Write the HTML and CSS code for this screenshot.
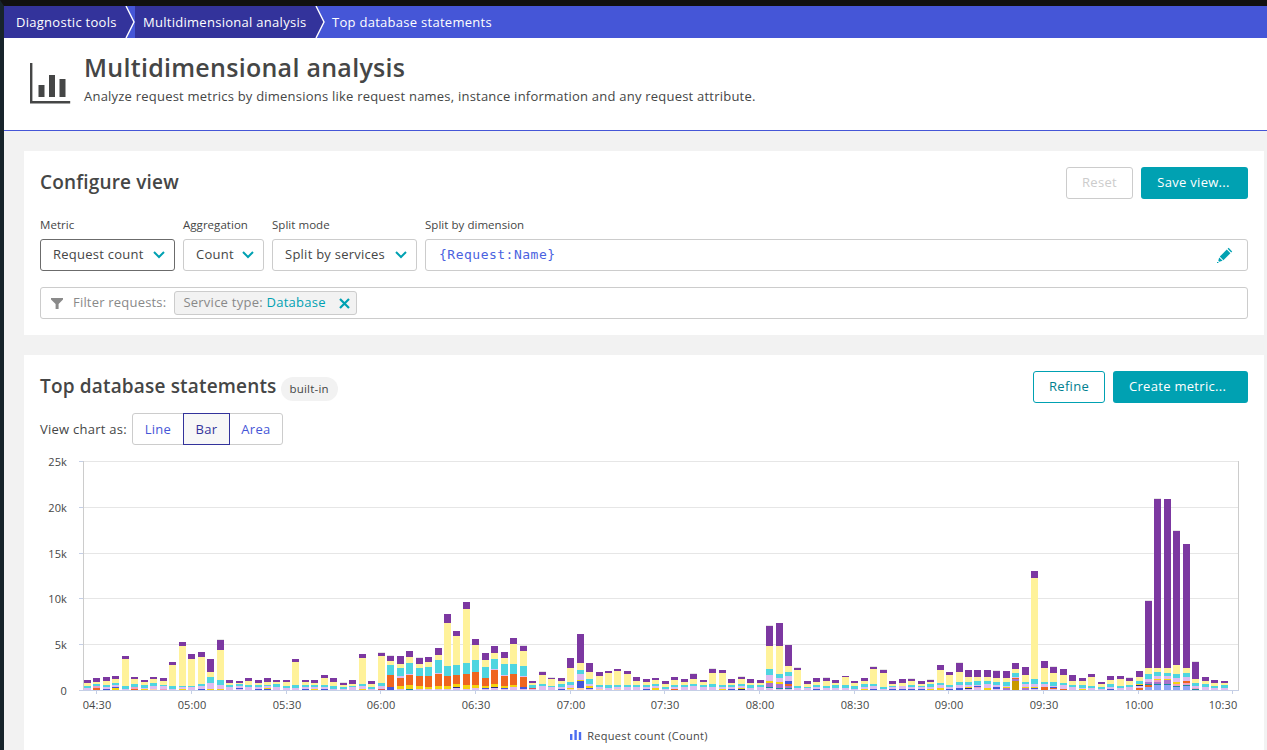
FILE: index.html

```html
<!DOCTYPE html>
<html lang="en">
<head>
    <meta charset="UTF-8">
    <meta name="viewport" content="width=device-width, initial-scale=1.0">
    <title>Multidimensional analysis</title>
    <link rel="stylesheet" href="styles.css">
</head>
<body>
    <div class="window">
        <nav class="breadcrumbs">
            <a class="crumb crumb-first">Diagnostic tools</a>
            <svg class="crumb-sep" width="10" height="32" viewBox="0 0 10 32"><polygon points="0,0 1,0 9,16 1,32 0,32" fill="#33339b"/><polyline points="1,0 9,16 1,32" fill="none" stroke="#fff" stroke-width="1.4"/></svg>
            <a class="crumb crumb-second">Multidimensional analysis</a>
            <svg class="crumb-sep" width="10" height="32" viewBox="0 0 10 32"><polygon points="0,0 1,0 9,16 1,32 0,32" fill="#33339b"/><polyline points="1,0 9,16 1,32" fill="none" stroke="#fff" stroke-width="1.4"/></svg>
            <a class="crumb crumb-current">Top database statements</a>
        </nav>

        <header class="page-head">
            <svg class="page-icon" width="42" height="44" viewBox="0 0 42 44">
                <path d="M1.2 2v39.2h39" fill="none" stroke="#454646" stroke-width="2.4"/>
                <rect x="8.5" y="24" width="6" height="12" fill="#454646"/>
                <rect x="19" y="14" width="6" height="22" fill="#454646"/>
                <rect x="29.5" y="18" width="6" height="18" fill="#454646"/>
            </svg>
            <div>
                <h1>Multidimensional analysis</h1>
                <p>Analyze request metrics by dimensions like request names, instance information and any request attribute.</p>
            </div>
        </header>

        <main class="content">
            <section class="card card-config">
                <div class="card-top">
                    <h2>Configure view</h2>
                    <div class="actions">
                        <button class="btn btn-disabled btn-reset">Reset</button>
                        <button class="btn btn-primary btn-save">Save view...</button>
                    </div>
                </div>

                <div class="fields">
                    <div class="field field-metric">
                        <label>Metric</label>
                        <div class="select select-active">Request count
                            <svg width="12" height="8" viewBox="0 0 12 8"><polyline points="1,1 6,6 11,1" fill="none" stroke="#00a1b2" stroke-width="2"/></svg>
                        </div>
                    </div>
                    <div class="field field-aggregation">
                        <label>Aggregation</label>
                        <div class="select">Count
                            <svg width="12" height="8" viewBox="0 0 12 8"><polyline points="1,1 6,6 11,1" fill="none" stroke="#00a1b2" stroke-width="2"/></svg>
                        </div>
                    </div>
                    <div class="field field-split">
                        <label>Split mode</label>
                        <div class="select">Split by services
                            <svg width="12" height="8" viewBox="0 0 12 8"><polyline points="1,1 6,6 11,1" fill="none" stroke="#00a1b2" stroke-width="2"/></svg>
                        </div>
                    </div>
                    <div class="field field-dimension">
                        <label>Split by dimension</label>
                        <div class="select dimension-input">
                            <code>{Request:Name}</code>
                            <svg width="16" height="16" viewBox="0 0 16 16" fill="#00a1b2"><path d="M11.6.8l3.6 3.6-1 1-3.6-3.6z"/><path d="M9.8 2.6l3.6 3.6-7 7-3.6-3.6z"/><path d="M2.2 10.4l3.4 3.4-3.4.9-.9-.9z"/><rect x="0" y="15" width="1.4" height="1"/></svg>
                        </div>
                    </div>
                </div>

                <div class="filter-box">
                    <svg width="12" height="11" viewBox="0 0 12 11"><path d="M0 0h12v1.6L7.6 6v5H4.6V6L0 1.6z" fill="#8a8a8a"/></svg>
                    <span class="filter-label">Filter requests:</span>
                    <span class="chip">Service type: <b>Database</b>
                        <svg width="11" height="11" viewBox="0 0 11 11"><path d="M1 1l9 9M10 1l-9 9" stroke="#00a1b2" stroke-width="2.2"/></svg>
                    </span>
                </div>
            </section>

            <section class="card card-chart">
                <div class="card-top">
                    <div class="title-row">
                        <h2>Top database statements</h2>
                        <span class="pill">built-in</span>
                    </div>
                    <div class="actions">
                        <button class="btn btn-outline btn-refine">Refine</button>
                        <button class="btn btn-primary btn-create">Create metric...</button>
                    </div>
                </div>

                <div class="view-row">
                    <span>View chart as:</span>
                    <div class="toggle">
                        <button class="toggle-line">Line</button>
                        <button class="toggle-bar active">Bar</button>
                        <button class="toggle-area">Area</button>
                    </div>
                </div>

                <!-- viewBox uses page coordinates so the numbers can be checked against the screenshot -->
                <svg id="chart" class="chart" width="1208" height="270" viewBox="40 450 1208 270"></svg>

                <div class="legend">
                    <svg width="12" height="10" viewBox="0 0 12 10" fill="#4c6ef0"><rect x="0" y="4" width="2.4" height="6"/><rect x="4.4" y="0" width="2.4" height="10"/><rect x="8.8" y="2" width="2.4" height="8"/></svg>
                    Request count (Count)
                </div>
            </section>
        </main>
    </div>
    <script src="chart.js"></script>
</body>
</html>
```

FILE: styles.css

```css
* {
    box-sizing: border-box;
}
html, body {
    margin: 0;
    height: 100%;
    overflow: hidden;
}
body {
    font-family: "Open Sans", "Noto Sans", sans-serif;
    color: #454646;
    font-size: 13px;
    letter-spacing: 0.25px;
}
.window {
    height: 750px;
    border-top: 6px solid #111;
    border-left: 4px solid #17242b;
    background-color: #f2f2f2;
    overflow: hidden;
}

/* Breadcrumbs */
.breadcrumbs {
    display: flex;
    height: 32px;
    align-items: stretch;
    background-color: #4556d7;
    color: #fff;
    font-size: 13px;
    line-height: 32px;
    letter-spacing: 0.28px;
}
.crumb {
    white-space: nowrap;
}
.crumb-first {
    background-color: #33339b;
    padding-left: 12px;
    width: 121px;
}
.crumb-second {
    background-color: #33339b;
    padding-left: 8px;
    width: 180px;
}
.crumb-current {
    padding-left: 7px;
}
.crumb-sep {
    flex: none;
}

/* Page header */
.page-head {
    display: flex;
    height: 93px;
    padding: 15px 0 0 26px;
    background-color: #fff;
    border-bottom: 1px solid #4556d7;
}
.page-icon {
    margin: 8px 12px 0 0;
    flex: none;
}
.page-head h1 {
    margin: 0;
    font-size: 25px;
    line-height: 29px;
    font-weight: 600;
    letter-spacing: 0.28px;
}
.page-head p {
    margin: 6px 0 0;
    font-size: 13px;
    line-height: 17px;
    letter-spacing: 0.22px;
}

/* Cards */
.content {
    padding: 20px 3px 0 20px;
}
.card {
    background-color: #fff;
    padding: 16px;
}
.card-config {
    height: 184px;
    margin-bottom: 20px;
}
.card-top {
    display: flex;
    justify-content: space-between;
    align-items: center;
    height: 32px;
}
.card h2 {
    margin: 0;
    padding-bottom: 2px;
    font-size: 19px;
    line-height: 28px;
    font-weight: 600;
    letter-spacing: 0.17px;
}
.actions {
    display: flex;
    gap: 8px;
}
.btn {
    height: 32px;
    border-radius: 3px;
    font-family: inherit;
    font-size: 13px;
    font-weight: 500;
    letter-spacing: 0.3px;
    padding: 0 0 2px;
    background: #fff;
}
.btn-primary {
    border: none;
    background-color: #00a1b2;
    color: #fff;
}
.btn-disabled {
    border: 1px solid #ccc;
    color: #ccc;
}
.btn-outline {
    border: 1px solid #00a1b2;
    color: #00808f;
}
.btn-reset { width: 67px; }
.btn-save {
    width: 107px;
    padding-right: 2px;
}
.btn-refine { width: 72px; }
.btn-create {
    width: 135px;
    padding-left: 16px;
    text-align: left;
}

/* Configure view fields */
.fields {
    display: flex;
    gap: 8px;
    margin-top: 18px;
}
.field label {
    display: block;
    font-size: 11.5px;
    line-height: 16px;
    letter-spacing: 0.04px;
    margin-bottom: 6px;
}
.field-metric { width: 135px; }
.field-aggregation { width: 81px; }
.field-split { width: 145px; }
.field-dimension { flex: 1; }
.select {
    display: flex;
    justify-content: space-between;
    align-items: center;
    height: 32px;
    padding: 0 9px 2px 12px;
    border: 1px solid #ccc;
    border-radius: 3px;
    white-space: nowrap;
}
.select svg {
    margin-top: 2px;
}
.select-active {
    border-color: #6b6b6b;
}
.dimension-input {
    padding: 0 14px 2px 13px;
}
.dimension-input code {
    font-family: "DejaVu Sans Mono", "Liberation Mono", monospace;
    font-size: 13px;
    letter-spacing: 0.5px;
    color: #4a62e0;
}
.filter-box {
    display: flex;
    align-items: center;
    height: 32px;
    margin-top: 16px;
    padding-left: 10px;
    border: 1px solid #ccc;
    border-radius: 3px;
}
.filter-label {
    margin-left: 10px;
    padding-bottom: 2px;
    letter-spacing: 0.2px;
    color: #898989;
}
.chip {
    display: flex;
    align-items: center;
    height: 24px;
    margin-left: 8px;
    padding: 0 6px 2px 8px;
    background-color: #f2f2f2;
    border: 1px solid #ccc;
    border-radius: 3px;
    color: #898989;
    white-space: pre;
}
.chip b {
    font-weight: 400;
    color: #00a1b2;
}
.chip svg {
    margin: 2px 0 0 13px;
}

/* Chart card */
.title-row {
    display: flex;
    align-items: center;
    gap: 4px;
}
.pill {
    height: 24px;
    padding: 0 9px;
    border-radius: 12px;
    background-color: #f2f2f2;
    font-size: 11.5px;
    line-height: 23px;
    letter-spacing: 0.2px;
    margin-top: 3px;
}
.view-row {
    display: flex;
    align-items: center;
    gap: 5px;
    margin-top: 10px;
}
.toggle {
    display: flex;
    height: 32px;
    border: 1px solid #ccc;
    border-radius: 3px;
}
.toggle button {
    border: none;
    background: none;
    padding: 0;
    font-family: inherit;
    font-size: 13px;
    letter-spacing: 0.25px;
    color: #4556d7;
}
.toggle-line { width: 50px; }
.toggle-bar { width: 47px; }
.toggle-area { width: 52px; }
.toggle .active {
    margin: -1px 0;
    background-color: #f7f7f7;
    border: 1px solid #33339b;
    color: #33339b;
}
.chart {
    display: block;
    margin-top: 5px;
}
.chart text {
    font-size: 11px;
    letter-spacing: 0.1px;
    fill: #454646;
}
.legend {
    display: flex;
    align-items: center;
    justify-content: center;
    gap: 5px;
    height: 20px;
    margin-top: 5px;
    padding-right: 10px;
    font-size: 11px;
    letter-spacing: 0.3px;
}
```

FILE: chart.js

```js
// Stacks are drawn bottom to top, letter = series, number = height in px (229px = 25k)
const colors = {
    p: "#7c38a1", y: "#fff29a", c: "#4fd5e0", l: "#dfbcf0", o: "#ef651f",
    g: "#f5d30f", b: "#4556d7", n: "#2a2a80", t: "#1a8a9e", r: "#e0524d",
    k: "#f19ec0", f: "#ffd0ab", v: "#a972cc", d: "#c99a00", w: "#8fa4f7",
    e: "#e6e6e6"
};

const bars = [
    "l2c2y3p3", "o2k2c2y2p4", "b1l2c2y4p4", "g2b1l2c2y4p3", "l1c3y27p3", "o1k2c3y5p2", "g1l1c3y3p2", "f1l3c3y4p2",
    "k1l3c1y4p3", "l1c3y21p3", "g1l2c1y40p4", "l3c1y27p5", "b1l3c2y27p5", "g1l6c6y5p13", "g1l4c5y30p10e1", "l3c2y2p3",
    "l1b1l2c2y1p2", "l3c2y4p3", "b1l2c2y2p3", "b1g1l2c1y3p4", "l3c3y2p2", "l2c2y4p2", "l2c3y23p3", "b1l2c2y3p2",
    "g1l2c2y2p3", "b1l2c2y7p3", "l1c3y4p4", "l1c2y2p2e1", "l3c1y2p4", "g1l3c2y26p4", "l1c2y3p3", "r1l3c3y27p3e1",
    "b3o12c10y4p5e1", "l1g3o8l2c8y4p8", "t1g4o10l1c11y6p6", "l1g3o10c8y4p6e1", "l1g2o11c9y5p5", "l1g3o12l1c13y5p7", "l1g3o10c10y43p9", "l2n1g3o9c10y29p5",
    "l1g4o11c11y54p7", "l2g3o13c12y15p6", "l1b1g2o8c11y7p7", "l2n1g3o14l1c10y6p7", "l1b1g2o10l1c11y6p6", "l3g2o11c10y20p6", "l1b2o10l1c10y15p5e1", "l1r1c3y2p2",
    "l4c2y9p3e1", "l3c1y7p1e1", "b1l2c3y3p3", "f1g1l3c3y14p10", "f2b7g1l6c4y7p29", "l1b1g2l2c5y7p9", "f1l2c2y9p4", "l2c3y12p2",
    "f1l2c2y14p2", "l3c2y11p3", "l3c2y4p4", "b1l2c2y3p3", "g2l2c2y4p2", "l1c2y3p3", "o1l2c2y5p3", "l3c2y3p3",
    "l4c2y5p5e1", "l3c2y3p2", "l3c3y11p4e1", "g1l2c2y12p3", "b1l2c2y2p4", "n1g1l2c2y5p2e1", "l2c3y2p4", "l3c2y2p3",
    "l2t1v4g2l6c6y23p20e1", "l1t1v4g2l4c4y28p23", "l1t1v2o2b3l5c4y6p21", "l2c2y16p2e1", "l2c1y3p3", "b1l2c2y3p4", "l2c2y5p3e1", "l2c3y2p3",
    "l2c3y8p1", "l1c3y3p2", "g1l2c3y3p3", "b1l3c2y15p2e1", "l1c2y14p3e1", "b1l2c1y2p3", "b1l3y3p4", "b1l2c2y4p2e1",
    "b1l2c1y2p3", "g1l2c3y2p2e1", "g2l3c2y13p5", "b1l2c2y10p3", "b2l3c3y10p9e1", "l1n1g1l2c3y5p7", "l2k1b1l1c4y4p7", "g2l4c3y4p7",
    "l1b2l2c3y4p7e1", "v2g1l1c4y4p7", "d9v2o1l1c4y4p6", "v2g1l3c2y7p8", "l1b1g1l3c5y101p7", "o3l3c2y14p7", "l1o1b1l1c4y9p6e1", "o1l4c2y8p6",
    "l3c2y4p6", "g1l1c3y4p3", "l2c2y9p3", "l1c2y3p2", "b1l2c3y4p4", "l2c2y7p3", "l3c2y4p3e1", "o2l2n1g1c3y4p6",
    "w3o2t1v2l3c5y6p67e1", "w5t1v2k2g1l3c4y4p169e1", "w5t1v4g1l3c3y5p169", "w3t1k2g2l4c4y9p134e1", "w4t1k2o2l4c4y5p124", "t1k1l2c3y4p17e1", "l3c3y3p4", "l2c2y3p3",
    "l2c3y2p2"
];

const chart = document.getElementById("chart");
const baseY = 690;

function add(tag, attrs, text) {
    const el = document.createElementNS("http://www.w3.org/2000/svg", tag);
    for (const key in attrs) el.setAttribute(key, attrs[key]);
    if (text) el.textContent = text;
    chart.appendChild(el);
}

// Grid and y axis
["0", "5k", "10k", "15k", "20k", "25k"].forEach((label, i) => {
    const y = baseY - Math.round(i * 45.8);
    if (i > 0) add("rect", { x: 83, y: y, width: 1155, height: 1, fill: "#e6e6e6" });
    add("rect", { x: 79, y: y, width: 4, height: 1, fill: "#c5cfe6" });
    add("text", { x: 67, y: y + 5, "text-anchor": "end" }, label);
});
add("rect", { x: 83, y: 461, width: 1, height: 229, fill: "#cccccc" });
add("rect", { x: 1238, y: 461, width: 1, height: 229, fill: "#cccccc" });

// Stacked bars
bars.forEach((bar, i) => {
    const x = Math.round(84 + 9.473 * i);
    let y = baseY;
    for (const [, key, height] of bar.matchAll(/([a-z])(\d+)/g)) {
        y -= Number(height);
        add("rect", { x: x, y: y, width: 7, height: height, fill: colors[key] });
    }
});

// X axis
add("rect", { x: 83, y: baseY, width: 1156, height: 1, fill: "#c5cfe6" });
const times = ["04:30", "05:00", "05:30", "06:00", "06:30", "07:00", "07:30", "08:00", "08:30", "09:00", "09:30", "10:00", "10:30"];
times.forEach((label, i) => {
    const x = Math.round(96.3 + 94.67 * i);
    add("rect", { x: x, y: baseY, width: 1, height: 4, fill: "#c5cfe6" });
    // the last label is pushed left so it stays inside the plot
    add("text", { x: i === 12 ? 1223 : x + 1, y: 709, "text-anchor": "middle" }, label);
});
```
